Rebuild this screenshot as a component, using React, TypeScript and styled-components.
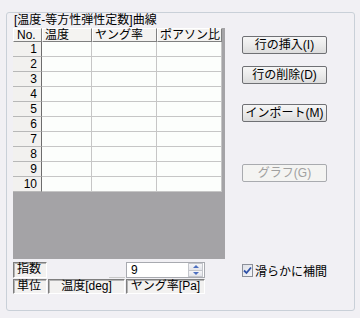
import { Fragment } from 'react';
import styled, { createGlobalStyle } from 'styled-components';

const GlobalStyle = createGlobalStyle`
    html, body {
        margin: 0;
        padding: 0;
        background: #f1f0f4;
    }
    * {
        box-sizing: border-box;
    }
`;

const Page = styled.div`
    width: 360px;
    height: 318px;
    padding: 12px 5px 7px 6px;
    background: #f1f0f4;
    font-family: "Liberation Sans", "Noto Sans CJK JP", sans-serif;
    font-size: 12px;
    color: #000;
    overflow: hidden;
`;

const Group = styled.div`
    height: 299px;
    border: 1px solid #c9d0d8;
    border-radius: 3px;
`;

const Title = styled.div`
    display: inline-block;
    margin: -8px 0 0 7px;
    padding: 0 1px 0 0;
    height: 14px;
    line-height: 14px;
    background: #f1f0f4;
    white-space: nowrap;
`;

const Body = styled.div`
    display: flex;
    padding: 1px 0 0 6px;
`;

const LeftColumn = styled.div`
    display: flex;
    flex-direction: column;
    width: 212px;
`;

const GridArea = styled.div`
    height: 231px;
    background: #a4a3a6;
`;

const Table = styled.div`
    display: grid;
    grid-template-columns: 29px 50px 65px 65px;
    grid-template-rows: 14px repeat(10, 15px);
    width: 209px;
    border-right: 1px solid #7b7b7e;
`;

const HeadCell = styled.div<{ $first?: boolean }>`
    background: #f4f3f1;
    border-right: 1px solid #808080;
    border-bottom: 1px solid #808080;
    border-top: 1px solid #ffffff;
    border-left: 1px solid #ffffff;
    padding-left: ${p => (p.$first ? '3px' : '2px')};
    line-height: 12px;
    white-space: nowrap;
`;

const RowHead = styled.div`
    background: #f2f1ef;
    border-right: 1px solid #6d6d6d;
    border-bottom: 1px solid #b8b8b8;
    text-align: right;
    padding-right: 4px;
    line-height: 14px;
`;

const DataCell = styled.div`
    background: #fcfefc;
    border-right: 1px solid #c6c6c6;
    border-bottom: 1px solid #c6c6c6;
`;

const Controls = styled.div`
    display: grid;
    grid-template-columns: 34px 77px 79px;
    grid-template-rows: 16px 15px;
    column-gap: 1px;
    row-gap: 1px;
    margin-top: 3px;
`;

const SunkenLabel = styled.div<{ $center?: boolean }>`
    background: #f2f1f0;
    border-top: 1px solid #7e7e7e;
    border-left: 1px solid #7e7e7e;
    border-right: 1px solid #ffffff;
    border-bottom: 1px solid #ffffff;
    box-shadow: inset 1px 1px 0 #b4b4b4;
    line-height: 13px;
    padding-left: ${p => (p.$center ? '0' : '3px')};
    text-align: ${p => (p.$center ? 'center' : 'left')};
    white-space: nowrap;
`;

const Spacer = styled.div`
    border-bottom: 1px solid #c8c8c8;
    margin-left: 61px;
`;

const NumberInput = styled.div`
    display: flex;
    align-items: center;
    justify-content: space-between;
    background: #ffffff;
    border: 1px solid #a8aab0;
    padding-left: 4px;
    line-height: 14px;
`;

const Spin = styled.div`
    display: flex;
    flex-direction: column;
    width: 15px;
    height: 14px;
    margin-right: 1px;
`;

const SpinHalf = styled.div<{ $down?: boolean }>`
    flex: 1;
    display: flex;
    align-items: center;
    justify-content: center;
    background: linear-gradient(#f6f6f8, #e3e4ea);
    border: 1px solid #c4c6cc;
    ${p => (p.$down ? 'border-top: none;' : '')}

    &::after {
        content: '';
        border-left: 3px solid transparent;
        border-right: 3px solid transparent;
        ${p => (p.$down ? 'border-top: 3px solid #4d6fbf;' : 'border-bottom: 3px solid #4d6fbf;')}
    }
`;

const RightColumn = styled.div`
    display: flex;
    flex-direction: column;
    margin-left: 17px;
    width: 85px;
`;

const Button = styled.div<{ $top: number; $disabled?: boolean }>`
    margin-top: ${p => p.$top}px;
    height: 18px;
    border: 1px solid ${p => (p.$disabled ? '#a9abaf' : '#6f7074')};
    border-radius: 2px;
    background: ${p => (p.$disabled ? '#f4f4f2' : 'linear-gradient(#f6f6f6 0%, #ebebeb 50%, #dcdcdc 100%)')};
    color: ${p => (p.$disabled ? '#a0a0a0' : '#000')};
    text-align: center;
    line-height: 16px;
    white-space: nowrap;
`;

const CheckRow = styled.label`
    display: flex;
    align-items: center;
    gap: 2px;
    margin-top: 82px;
    height: 13px;
    white-space: nowrap;
`;

const CheckBox = styled.span`
    display: inline-flex;
    align-items: center;
    justify-content: center;
    width: 13px;
    height: 13px;
    border: 1px solid #8c9099;
    background: linear-gradient(135deg, #dfe1e8, #f4f5f8);
`;

const rows = Array.from({ length: 10 }, (_, i) => i + 1);

const App = () => {
    return (
        <Page>
            <GlobalStyle />
            <Group>
                <Title>[温度-等方性弾性定数]曲線</Title>
                <Body>
                    <LeftColumn>
                        <GridArea>
                            <Table>
                                <HeadCell $first>No.</HeadCell>
                                <HeadCell>温度</HeadCell>
                                <HeadCell>ヤング率</HeadCell>
                                <HeadCell>ポアソン比</HeadCell>
                                {rows.map(n => (
                                    <Fragment key={n}>
                                        <RowHead>{n}</RowHead>
                                        <DataCell />
                                        <DataCell />
                                        <DataCell />
                                    </Fragment>
                                ))}
                            </Table>
                        </GridArea>
                        <Controls>
                            <SunkenLabel>指数</SunkenLabel>
                            <Spacer />
                            <NumberInput>
                                <span>9</span>
                                <Spin>
                                    <SpinHalf />
                                    <SpinHalf $down />
                                </Spin>
                            </NumberInput>
                            <SunkenLabel>単位</SunkenLabel>
                            <SunkenLabel $center>温度[deg]</SunkenLabel>
                            <SunkenLabel $center>ヤング率[Pa]</SunkenLabel>
                        </Controls>
                    </LeftColumn>
                    <RightColumn>
                        <Button $top={8}>行の挿入(I)</Button>
                        <Button $top={12}>行の削除(D)</Button>
                        <Button $top={20}>インポート(M)</Button>
                        <Button $top={42} $disabled>グラフ(G)</Button>
                        <CheckRow>
                            <CheckBox>
                                <svg width="9" height="9" viewBox="0 0 9 9">
                                    <path d="M1 4.5 L3.5 7 L8 1.5" fill="none" stroke="#2f52a8" strokeWidth="1.8" />
                                </svg>
                            </CheckBox>
                            滑らかに補間
                        </CheckRow>
                    </RightColumn>
                </Body>
            </Group>
        </Page>
    );
};

export default App;
